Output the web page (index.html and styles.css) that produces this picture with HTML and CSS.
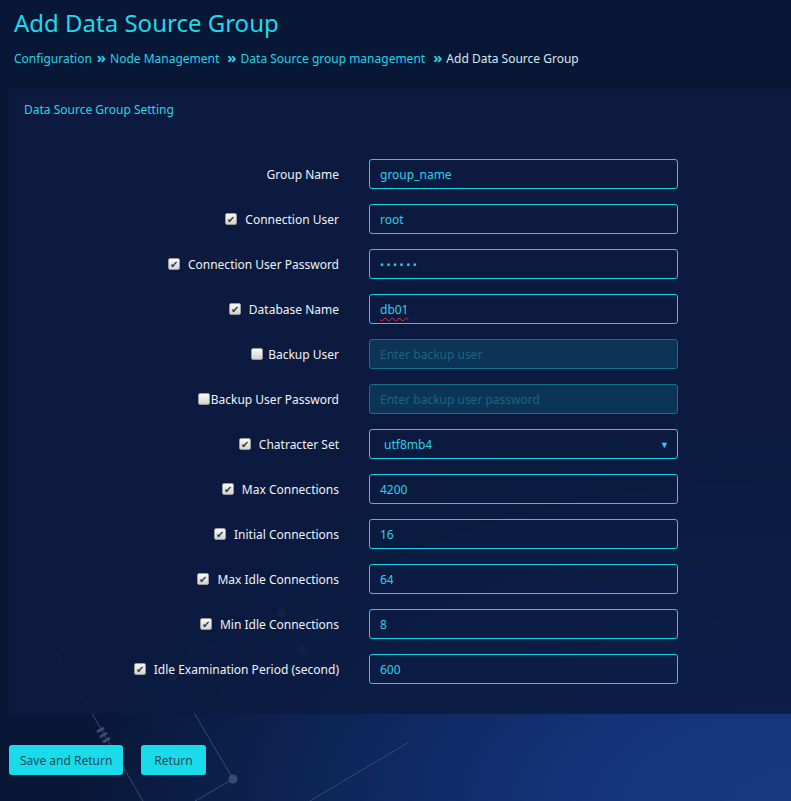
FILE: index.html
```html
<!DOCTYPE html>
<html lang="en">
<head>
<meta charset="utf-8">
<title>Add Data Source Group</title>
<link rel="stylesheet" href="styles.css">
</head>
<body>
<svg class="deco" width="791" height="801" viewBox="0 0 791 801" xmlns="http://www.w3.org/2000/svg">
  <g stroke="#3a4a6e" stroke-width="1" fill="none">
    <line x1="55" y1="650" x2="143" y2="801"/>
    <line x1="173" y1="677" x2="233" y2="779"/>
    <line x1="233" y1="779" x2="195" y2="801"/>
    <line x1="190" y1="655" x2="282" y2="612"/>
    <line x1="282" y1="613" x2="302" y2="649"/>
    <line x1="302" y1="649" x2="340" y2="627"/>
    <line x1="310" y1="801" x2="409" y2="742"/>
  </g>
  <g stroke="#3c4c70" stroke-width="3">
    <line x1="97" y1="732" x2="104" y2="728"/>
    <line x1="100" y1="737" x2="107" y2="733"/>
    <line x1="103" y1="742" x2="110" y2="738"/>
  </g>
  <g fill="#3a4a6e">
    <circle cx="233" cy="779" r="4.5"/>
    <circle cx="282" cy="613" r="4.5"/>
    <circle cx="302" cy="649" r="4"/>
    <circle cx="173" cy="677" r="4"/>
  </g>
</svg>
<div class="page">
  <h1 class="title">Add Data Source Group</h1>
  <nav class="crumbs">
    <a class="crumb">Configuration</a><span class="sep">»</span>
    <a class="crumb">Node Management</a><span class="sep wide">»</span>
    <a class="crumb">Data Source group management</a><span class="sep wide">»</span>
    <span class="crumb current">Add Data Source Group</span>
  </nav>
  <section class="panel">
    <h2 class="panel-title">Data Source Group Setting</h2>
    <form class="form">
      <label class="lbl">Group Name</label>
      <input class="field" type="text" value="group_name">

      <label class="lbl"><span class="cb on"></span>Connection User</label>
      <input class="field" type="text" value="root">

      <label class="lbl"><span class="cb on"></span>Connection User Password</label>
      <input class="field pw" type="text" value="••••••">

      <label class="lbl"><span class="cb on"></span>Database Name</label>
      <div class="field"><span class="spell">db01</span></div>

      <label class="lbl up"><span class="cb off gap5"></span>Backup User</label>
      <input class="field disabled" type="text" placeholder="Enter backup user" disabled>

      <label class="lbl up"><span class="cb off gap1"></span>Backup User Password</label>
      <input class="field disabled" type="text" placeholder="Enter backup user password" disabled>

      <label class="lbl"><span class="cb on"></span>Chatracter Set</label>
      <div class="field select"><span>utf8mb4</span><span class="arrow">▼</span></div>

      <label class="lbl"><span class="cb on"></span>Max Connections</label>
      <input class="field" type="text" value="4200">

      <label class="lbl"><span class="cb on"></span>Initial Connections</label>
      <input class="field" type="text" value="16">

      <label class="lbl"><span class="cb on"></span>Max Idle Connections</label>
      <input class="field" type="text" value="64">

      <label class="lbl"><span class="cb on"></span>Min Idle Connections</label>
      <input class="field" type="text" value="8">

      <label class="lbl"><span class="cb on"></span>Idle Examination Period (second)</label>
      <input class="field" type="text" value="600">
    </form>
  </section>
  <div class="actions">
    <button class="btn" type="button">Save and Return</button>
    <button class="btn btn-return" type="button">Return</button>
  </div>
</div>
</body>
</html>
```
FILE: styles.css
```css
* { box-sizing: border-box; }
html, body { margin: 0; padding: 0; }
body {
  width: 791px;
  height: 801px;
  overflow: hidden;
  position: relative;
  font-family: "Noto Sans", "Open Sans", sans-serif;
  font-size: 12px;
  color: #e6edf5;
  background:
    radial-gradient(ellipse 720px 380px at 100% 100%, #17397f 0%, #14337a 30%, #0f275d 60%, rgba(9,24,58,0) 100%),
    #081736;
}
.deco {
  position: absolute;
  left: 0;
  top: 0;
  z-index: 0;
  pointer-events: none;
}
.page {
  position: relative;
  z-index: 1;
  padding: 0 0 0 9px;
}
.title {
  margin: 0;
  padding: 6px 0 0 5px;
  height: 40px;
  font-weight: 400;
  font-size: 24px;
  line-height: 34px;
  color: #1ed9ec;
}
.crumbs {
  display: flex;
  align-items: center;
  padding-left: 5px;
  height: 37px;
  font-size: 12px;
  color: #22d3e6;
}
.crumb { color: #22d3e6; }
.crumb.current { color: #d4eaf0; }
.sep {
  color: #22d3e6;
  font-weight: 700;
  font-size: 15px;
  margin: -3px 4px 0 5px;
}
.sep.wide { margin-left: 8px; margin-right: 4px; }
.panel {
  margin-top: 12px;
  background: rgba(12, 27, 64, 0.86);
  padding: 12px 0 29px 0;
  height: 625px;
}
.panel-title {
  margin: 0 0 0 15px;
  font-weight: 400;
  font-size: 12px;
  line-height: 18px;
  color: #2ad4e4;
}
.form {
  margin-top: 40px;
  display: grid;
  grid-template-columns: 330px 309px;
  column-gap: 30px;
  row-gap: 15px;
}
.lbl {
  display: flex;
  justify-content: flex-end;
  align-items: center;
  height: 30px;
  font-size: 12px;
  color: #eef3f8;
}
.lbl.up { align-items: flex-start; padding-top: 7px; }
.cb {
  width: 12px;
  height: 12px;
  margin-right: 8px;
  border: 1px solid #9a9a9a;
  border-radius: 2px;
  background: linear-gradient(#fafafa, #d2d2d2);
  display: inline-flex;
  align-items: center;
  justify-content: center;
  color: #3a3a3a;
  font-size: 10px;
  line-height: 1;
}
.cb.on::before { content: "✔"; }
.cb.off { margin-top: 3px; }
.cb.gap5 { margin-right: 5px; margin-top: 2px; }
.cb.gap1 { margin-right: 1px; margin-top: 2px; }
.field {
  height: 30px;
  width: 309px;
  border: 1px solid #1ad2e6;
  border-radius: 3px;
  background: transparent;
  padding: 0 10px;
  font-family: "Noto Sans", "Open Sans", sans-serif;
  font-size: 12px;
  color: #2bd0ea;
  display: flex;
  align-items: center;
  outline: none;
}
.field.pw { font-size: 11px; letter-spacing: 2.4px; }
.spell {
  text-decoration: underline wavy #e0303a;
  text-decoration-thickness: 1px;
  text-underline-offset: 3px;
}
.field.disabled {
  background: #0b3457;
  border-color: #14728f;
}
.field.disabled::placeholder { color: #1e6480; }
.field.select {
  padding: 0 8px 0 14px;
  justify-content: space-between;
}
.arrow { font-size: 9px; color: #2bd0ea; }
.actions {
  display: flex;
  gap: 18px;
  margin-top: 31px;
}
.btn {
  height: 30px;
  padding: 0 11px;
  border: none;
  border-radius: 3px;
  background: #19dbea;
  color: #1d4b5c;
  font-family: "Noto Sans", "Open Sans", sans-serif;
  font-size: 12px;
}
.btn-return { padding: 0 13px; }
```
